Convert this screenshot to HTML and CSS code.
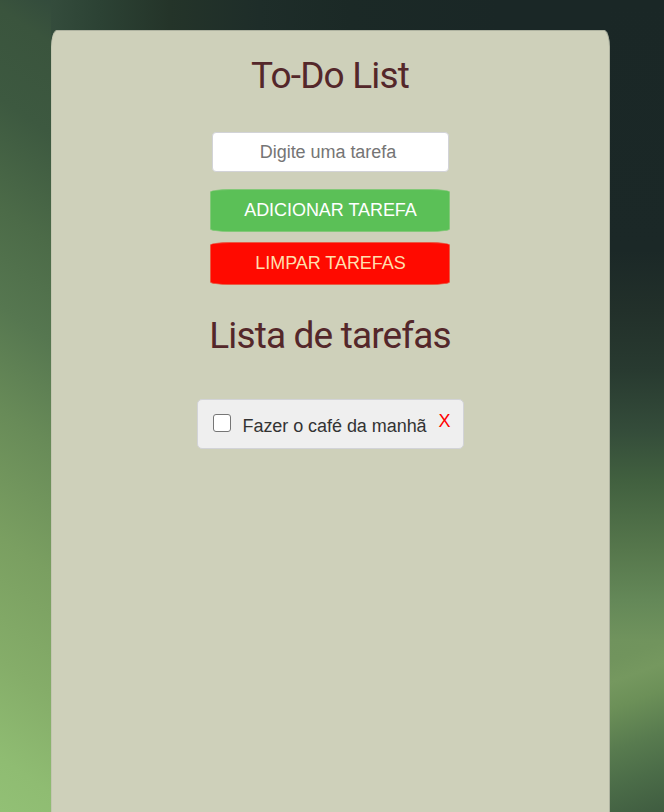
FILE: index.html
```html
<!DOCTYPE html>
<html lang="pt-BR">
<head>
<meta charset="utf-8">
<title>To-Do List</title>
<link rel="stylesheet" href="styles.css">
</head>
<body>
<main class="panel">
  <h1 class="title">To-Do List</h1>
  <form class="form">
    <input class="field" type="text" placeholder="Digite uma tarefa" aria-label="Tarefa">
    <button class="btn add" type="button">ADICIONAR TAREFA</button>
    <button class="btn clear" type="button">LIMPAR TAREFAS</button>
  </form>
  <h2 class="title list-title">Lista de tarefas</h2>
  <ul class="tasks">
    <li class="task">
      <input class="check" type="checkbox" aria-label="Concluir">
      <span class="label">Fazer o café da manhã</span>
      <button class="remove" type="button">X</button>
    </li>
  </ul>
</main>
</body>
</html>
```
FILE: styles.css
```css
* { box-sizing: border-box; }
html { height: 100%; overflow: hidden; }
body {
  margin: 0;
  height: 100%;
  padding: 30px 54px 0 51px;
  font-family: "Liberation Sans", Arial, sans-serif;
  background:
    linear-gradient(160deg, #70935d 0, #71945d 20px, #75985f 40px, #6c9058 65px, #587b4f 105px, #4b6c48 140px, #3f5c40 180px) 100% 640px / 54px 172px no-repeat,
    linear-gradient(180deg, #1a2726 0, #1b2827 250px, #22302a 310px, #283a30 370px, #344c3a 430px, #41603f 480px, #56774c 550px, #648858 600px, #70935d 640px) 100% 0 / 54px 640px no-repeat,
    linear-gradient(215deg, #334b3c 0, #3a543d 36px, #3d5940 110px, #4c6b48 200px, #567750 280px, #688b58 365px, #7a9f61 470px, #85ad69 570px, #8fbc72 650px, #92c075 694px) 0 0 / 51px 100% no-repeat,
    linear-gradient(90deg, #344c3c 51px, #2c4234 100px, #243429 170px, #1e2d29 260px, #1b2926 350px, #1a2726 500px);
}
.panel {
  width: 559px;
  height: 782px;
  padding-top: 24px;
  display: flex;
  flex-direction: column;
  align-items: center;
  background: #ced0ba;
  border: 1px solid #aeb2a0;
  border-left-color: #c3c6b0;
  border-bottom: 0;
  border-radius: 6px 6px 0 0 / 17px 17px 0 0;
}
.title {
  margin: 0 1px 0 0;
  height: 42px;
  font: 400 37px/42px Roboto, sans-serif;
  letter-spacing: -.85px;
  color: #54272a;
}
.form {
  margin-top: 35px;
  display: flex;
  flex-direction: column;
  align-items: center;
}
.field {
  width: 237px;
  height: 40px;
  margin: 0 0 17px;
  padding: 0 5px 0 0;
  font: 18px "Liberation Sans", Arial, sans-serif;
  letter-spacing: -.04px;
  text-align: center;
  border: 1px solid #d2d3d7;
  border-radius: 4px;
  background: #fff;
}
.field::placeholder { color: #757575; }
.btn {
  width: 240px;
  height: 43px;
  margin-right: 1px;
  padding: 0 0 0 1px;
  font: 18px "Liberation Sans", Arial, sans-serif;
  letter-spacing: -.05px;
  border: 1px solid;
  border-radius: 20px / 3px;
}
.add { color: #fff; background: #5bc057; border-color: #83c878; margin-bottom: 10px; }
.clear { color: #ffdfad; background: #ff0a00; border-color: #e85b44; }
.list-title { margin-top: 30px; }
.tasks { margin: 42px 1px 0 0; padding: 0; list-style: none; }
.task {
  width: 267px;
  height: 50px;
  padding: 0 12px 0 15px;
  display: flex;
  align-items: center;
  background: #efefef;
  border: 1px solid #d2d3d7;
  border-radius: 5px;
}
.check {
  appearance: none;
  width: 18px;
  height: 18px;
  margin: 0 12px 2px 0;
  border: 1px solid #767676;
  border-radius: 3px;
  background: #fff;
}
.label { font-size: 18px; letter-spacing: -.05px; color: #333; padding-top: 4px; white-space: nowrap; }
.remove {
  margin: 0 0 6px auto;
  padding: 0;
  border: 0;
  background: none;
  color: #f00;
  font: 18px "Liberation Sans", Arial, sans-serif;
}
```
